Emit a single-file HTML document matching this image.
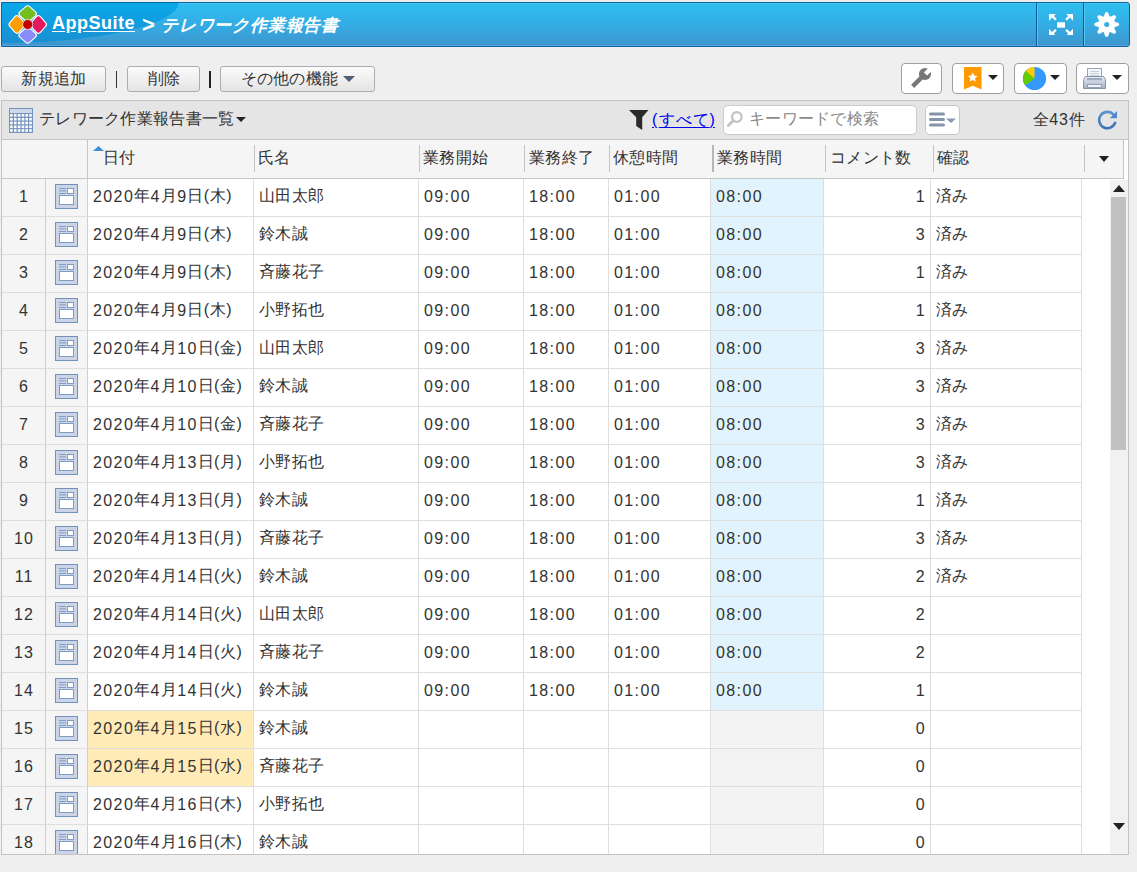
<!DOCTYPE html>
<html lang="ja"><head><meta charset="utf-8">
<style>
*{box-sizing:border-box;margin:0;padding:0}
html,body{width:1137px;height:872px;overflow:hidden;background:#efefef;font-family:"Liberation Sans",sans-serif;font-size:16px;color:#333;position:relative;letter-spacing:0.3px}
.abs{position:absolute}
.nw{white-space:nowrap}
.d{letter-spacing:1.4px;position:relative;top:1px}
.p{letter-spacing:0.8px}
#hdr{position:absolute;left:1px;top:2px;width:1129px;height:45px;border:1px solid #0b63a0;border-radius:0 3px 3px 0;
 background:linear-gradient(to bottom,#2ebef0 0%,#33ade4 50%,#3e95cc 100%);overflow:hidden;box-shadow:inset 0 1px 0 #4ac4f0,inset 0 -1px 0 #58a4da}
#gloss{position:absolute;left:-179px;top:-42px;width:356px;height:82px;border-radius:50%;background:linear-gradient(to bottom,#08aae9 50%,#1a8fd3 100%)}
#hdr .t1{position:absolute;left:50px;top:10px;color:#fff;font-weight:bold;font-size:18px;white-space:nowrap;text-decoration:underline;text-underline-offset:2px;letter-spacing:0.5px}
#hdr .t2{position:absolute;left:140px;top:9px;color:#fff;font-weight:bold;font-size:22px;white-space:nowrap}
#hdr .t3{position:absolute;left:159px;top:11px;color:#fff;font-weight:bold;font-size:17px;white-space:nowrap;font-style:italic;letter-spacing:0.8px}
.sep{position:absolute;top:0;width:2px;height:43px;border-left:1px solid #0b5f98;border-right:1px solid #58c3ee}
.btn{position:absolute;top:66px;height:26px;border:1px solid #adadad;border-radius:3px;background:linear-gradient(#fbfbfb,#e4e4e4);text-align:center;line-height:23px;padding-left:1px;color:#333;white-space:nowrap}
.ibtn{position:absolute;top:63px;height:31px;border:1px solid #a0a0a0;border-radius:4px;background:#fff}
.arr{position:absolute;width:0;height:0;border-left:5px solid transparent;border-right:5px solid transparent;border-top:5px solid #222}
#panelbg{position:absolute;left:1px;top:100px;width:1128px;height:755px;background:#fff}
#panelbd{position:absolute;left:1px;top:100px;width:1128px;height:755px;border:1px solid #c3c3c3}
#tbar{position:absolute;left:2px;top:101px;width:1126px;height:39px;background:#e5e5e5;border-bottom:1px solid #c6c6c6}
#ghead{position:absolute;left:2px;top:140px;width:1122px;height:39px;background:#f5f5f5;border-bottom:1px solid #c6c6c6;border-right:1px solid #c6c6c6}
.hc{position:absolute;top:140px;height:38px;line-height:36px;color:#333;white-space:nowrap}
.hsep{position:absolute;top:145px;width:1px;height:27px;background:#c4c4c4}
#clip{position:absolute;left:0;top:0;width:1137px;height:854px;overflow:hidden}
.row{position:absolute;left:0;width:1081px;height:38px}
.c{position:absolute;top:0;height:38px;border-right:1px solid #dedede;border-bottom:1px solid #dedede;line-height:33px;padding-left:5px;white-space:nowrap;background:#fff;color:#333}
.c.rn{background:#f5f5f5;text-align:center;padding-left:2px;letter-spacing:1px;padding-top:1px;border-right:1px solid #cfcfcf;border-bottom-color:#dcdcdc;padding-right:1px}
.c.ic{background:#f5f5f5;padding-left:0;line-height:0;border-right-color:#cfcfcf}
.ri{position:absolute;left:9px;top:5px}
.c.yel{background:#ffebb7}
.c.blue{background:#e1f3fc}
.c.grey{background:#f3f3f3}
.c.r{text-align:right;padding-right:4px;padding-left:0}
</style></head><body>
<svg width="0" height="0" style="position:absolute">
 <defs>
  <g id="rec">
   <rect x="0.5" y="0.5" width="22" height="24" fill="#cbd5e7" stroke="#7192bf"/>
   <rect x="4" y="4" width="7" height="1" fill="#7f9cc4"/>
   <rect x="4" y="6" width="7" height="1.6" fill="#9bb1d0"/>
   <rect x="4" y="9" width="7" height="1" fill="#7f9cc4"/>
   <rect x="12.5" y="4.5" width="6" height="5" fill="#fff" stroke="#7f9cc4"/>
   <rect x="4.5" y="11.5" width="14" height="9" fill="#fff" stroke="#7f9cc4"/>
  </g>
 </defs>
</svg>
<div id="hdr">
 
 <div id="gloss"></div><svg class="abs" style="left:0;top:0" width="50" height="44" viewBox="2 3 50 44" stroke-linejoin="round"><path d="M27.70 8.80L33.40 13.80L27.70 18.80L22.00 13.80Z" fill="#fff" stroke="#fff" stroke-width="7.00"/><path d="M38.40 18.80L43.40 24.50L38.40 30.20L33.40 24.50Z" fill="#fff" stroke="#fff" stroke-width="7.00"/><path d="M27.70 30.20L33.40 35.20L27.70 40.20L22.00 35.20Z" fill="#fff" stroke="#fff" stroke-width="7.00"/><path d="M17.00 18.80L22.00 24.50L17.00 30.20L12.00 24.50Z" fill="#fff" stroke="#fff" stroke-width="7.00"/><path d="M27.70 8.80L33.40 13.80L27.70 18.80L22.00 13.80Z" fill="#74bf1f" stroke="#74bf1f" stroke-width="4.80"/><path d="M38.40 18.80L43.40 24.50L38.40 30.20L33.40 24.50Z" fill="#e5195e" stroke="#e5195e" stroke-width="4.80"/><path d="M27.70 30.20L33.40 35.20L27.70 40.20L22.00 35.20Z" fill="#8b8cf9" stroke="#8b8cf9" stroke-width="4.80"/><path d="M17.00 18.80L22.00 24.50L17.00 30.20L12.00 24.50Z" fill="#ff9d00" stroke="#ff9d00" stroke-width="4.80"/><circle cx="27.7" cy="24.5" r="5.3" fill="#f3dede"/><circle cx="27.7" cy="24.5" r="4.6" fill="#c40000"/></svg><div class="t1">AppSuite</div><div class="t2">&gt;</div><div class="t3">テレワーク作業報告書</div>
 <div class="sep" style="left:1034px"></div>
 <div class="sep" style="left:1081px"></div>
 <svg class="abs" style="left:1047px;top:10.5px" width="24" height="21.5" viewBox="0 0 24 22" preserveAspectRatio="none" fill="#fff">
  <rect x="8" y="8.5" width="8" height="5.5"/>
  <path d="M0 0H6.8L4.8 2 7.8 5 6.1 6.7 3.1 3.7 0 6.8z"/>
  <path d="M24 0H17.2L19.2 2 16.2 5 17.9 6.7 20.9 3.7 24 6.8z"/>
  <path d="M0 22H6.8L4.8 20 7.8 17 6.1 15.3 3.1 18.3 0 15.2z"/>
  <path d="M24 22H17.2L19.2 20 16.2 17 17.9 15.3 20.9 18.3 24 15.2z"/>
 </svg>
 <svg class="abs" style="left:1092px;top:9px" width="26" height="26" viewBox="0 0 26 26">
  <g fill="#fff" transform="translate(12.7 12.4)">
   <circle r="8.4"/>
   <g id="tooth"><path d="M-3.2 -6.8L-1.4 -12Q0 -12.8 1.4 -12L3.2 -6.8z"/></g>
   <use href="#tooth" transform="rotate(45)"/><use href="#tooth" transform="rotate(90)"/><use href="#tooth" transform="rotate(135)"/>
   <use href="#tooth" transform="rotate(180)"/><use href="#tooth" transform="rotate(225)"/><use href="#tooth" transform="rotate(270)"/><use href="#tooth" transform="rotate(315)"/>
  </g>
  <circle cx="12.7" cy="12.4" r="2.5" fill="#33ade4"/>
 </svg>
</div>

<!-- toolbar -->
<div class="btn" style="left:1px;width:105px">新規追加</div>
<div class="abs" style="left:116px;top:71px;width:1px;height:17px;background:#333"></div>
<div class="btn" style="left:127px;width:73px">削除</div>
<div class="abs" style="left:209px;top:71px;width:2px;height:17px;background:#222"></div>
<div class="btn" style="left:220px;width:155px">その他の機能<span style="display:inline-block;width:0;height:0;border-left:6px solid transparent;border-right:6px solid transparent;border-top:6px solid #4f6078;vertical-align:middle;margin-left:5px;margin-top:-2px"></span></div>

<div class="ibtn" style="left:901px;width:41px">
 <svg class="abs" style="left:3px;top:0px" width="32" height="28" viewBox="0 0 32 28"><defs><mask id="wm"><rect width="32" height="28" fill="#fff"/><path d="M18.9 8.5L22.1 11.6L28 5.7L24.8 2.6z" fill="#000"/></mask></defs><g fill="#777" mask="url(#wm)"><circle cx="20" cy="10" r="6.1"/><path d="M6.1 20.8L9.1 23.9L19.6 13.4L16.6 10.3z"/></g></svg>
</div>
<div class="ibtn" style="left:952px;width:52px">
 <svg class="abs" style="left:11px;top:3px" width="18" height="24" viewBox="0 0 18 24"><path d="M0 0h17.5v22.5l-8.75-3.8-8.75 3.8z" fill="#ff9900"/><path d="M8.75 5.6l1.45 3 3.3.4-2.4 2.3.65 3.3-3-1.6-3 1.6.65-3.3-2.4-2.3 3.3-.4z" fill="#fff"/></svg>
 <span class="arr" style="left:35px;top:11px"></span>
</div>
<div class="ibtn" style="left:1014px;width:53px">
 <svg class="abs" style="left:7px;top:2px" width="25" height="25" viewBox="0 0 25 25"><circle cx="12.5" cy="12.5" r="11.6" fill="#3399ff"/><path d="M12.5 12.5V0.9A11.6 11.6 0 0 0 3.6 5z" fill="#ffcc00"/><path d="M12.5 12.5L3.6 5A11.6 11.6 0 0 0 3.2 19.5z" fill="#66cc00"/></svg>
 <span class="arr" style="left:35px;top:11px"></span>
</div>
<div class="ibtn" style="left:1076px;width:53px">
 <svg class="abs" style="left:6px;top:4px" width="24" height="22" viewBox="0 0 24 22">
  <defs><linearGradient id="pg" x1="0" y1="0" x2="0" y2="1"><stop offset="0" stop-color="#e6ecf4"/><stop offset="1" stop-color="#a3b2c6"/></linearGradient></defs>
  <rect x="4.5" y="0.5" width="14" height="10" fill="#f4f7fb" stroke="#94a4bb"/>
  <rect x="7" y="3" width="9" height="0.8" fill="#b5c3d5"/><rect x="7" y="5" width="9" height="0.8" fill="#b5c3d5"/><rect x="7" y="7" width="9" height="0.8" fill="#b5c3d5"/>
  <path d="M2.5 8.5h18l2 3v9H0.5v-9z" fill="url(#pg)" stroke="#8795aa"/>
  <rect x="4" y="10" width="15" height="2.2" fill="#9eacbf"/>
  <rect x="4.5" y="16.5" width="14" height="3" fill="#f1f4f8" stroke="#8d9bb0" stroke-width="0.9"/>
 </svg>
 <span class="arr" style="left:35px;top:11px"></span>
</div>

<div id="panelbg"></div>
<div id="tbar"></div>
<svg class="abs" style="left:9px;top:108px" width="24" height="25" viewBox="0 0 24 25">
 <rect x="0" y="0" width="24" height="25" fill="#7393bf"/>
 <rect x="1" y="1" width="22" height="4" fill="#d0d8ea"/>
 <g fill="#fff">
 <rect x="1.12" y="6.08" width="2.6" height="2.6"/><rect x="1.12" y="9.93" width="2.6" height="2.6"/><rect x="1.12" y="13.70" width="2.6" height="2.6"/><rect x="1.12" y="17.53" width="2.6" height="2.6"/><rect x="1.12" y="21.20" width="2.6" height="2.6"/><rect x="4.98" y="6.08" width="2.6" height="2.6"/><rect x="4.98" y="9.93" width="2.6" height="2.6"/><rect x="4.98" y="13.70" width="2.6" height="2.6"/><rect x="4.98" y="17.53" width="2.6" height="2.6"/><rect x="4.98" y="21.20" width="2.6" height="2.6"/><rect x="8.83" y="6.08" width="2.6" height="2.6"/><rect x="8.83" y="9.93" width="2.6" height="2.6"/><rect x="8.83" y="13.70" width="2.6" height="2.6"/><rect x="8.83" y="17.53" width="2.6" height="2.6"/><rect x="8.83" y="21.20" width="2.6" height="2.6"/><rect x="12.68" y="6.08" width="2.6" height="2.6"/><rect x="12.68" y="9.93" width="2.6" height="2.6"/><rect x="12.68" y="13.70" width="2.6" height="2.6"/><rect x="12.68" y="17.53" width="2.6" height="2.6"/><rect x="12.68" y="21.20" width="2.6" height="2.6"/><rect x="16.42" y="6.08" width="2.6" height="2.6"/><rect x="16.42" y="9.93" width="2.6" height="2.6"/><rect x="16.42" y="13.70" width="2.6" height="2.6"/><rect x="16.42" y="17.53" width="2.6" height="2.6"/><rect x="16.42" y="21.20" width="2.6" height="2.6"/><rect x="20.20" y="6.08" width="2.6" height="2.6"/><rect x="20.20" y="9.93" width="2.6" height="2.6"/><rect x="20.20" y="13.70" width="2.6" height="2.6"/><rect x="20.20" y="17.53" width="2.6" height="2.6"/><rect x="20.20" y="21.20" width="2.6" height="2.6"/>
 </g>
</svg>
<div class="abs nw" style="left:39px;top:109px">テレワーク作業報告書一覧<span style="display:inline-block;border-left:5px solid transparent;border-right:5px solid transparent;border-top:5px solid #222;vertical-align:middle;margin-left:1px;margin-top:-1px"></span></div>
<svg class="abs" style="left:629px;top:110px" width="20" height="20" viewBox="0 0 20 20"><path d="M0 0h19.5l-6.3 7.3V20l-6-4V7.3z" fill="#2a2a2a"/></svg>
<div class="abs nw" style="left:652px;top:110px;color:#0000ee;text-decoration:underline;text-underline-offset:2px;letter-spacing:0.9px"><span style="letter-spacing:1.5px">(</span>すべて<span style="letter-spacing:0">)</span></div>
<div class="abs" style="left:723px;top:105px;width:194px;height:30px;background:#fff;border:1px solid #cccccc;border-radius:5px">
 <svg class="abs" style="left:2px;top:3px" width="18" height="18" viewBox="0 0 18 18"><circle cx="10.8" cy="8" r="4.8" fill="none" stroke="#c2c2c2" stroke-width="2.2"/><path d="M7.3 11.5L2.3 16.5" stroke="#c2c2c2" stroke-width="2.6" stroke-linecap="round"/></svg>
 <span class="abs nw" style="left:25px;top:3px;color:#888">キーワードで検索</span>
</div>
<div class="abs" style="left:925px;top:105px;width:35px;height:30px;background:#fff;border:1px solid #c6c6c6;border-radius:5px">
 <svg class="abs" style="left:3px;top:6px" width="28" height="16" viewBox="0 0 28 16"><rect x="0" y="0.5" width="16" height="3" rx="1.5" fill="#8593ab"/><rect x="0" y="6" width="16" height="3" rx="1.5" fill="#8593ab"/><rect x="0" y="11.5" width="16" height="3" rx="1.5" fill="#8593ab"/><path d="M17 6.5h10l-5 4.5z" fill="#8a9ab5"/></svg>
</div>
<div class="abs nw" style="left:1033px;top:110px">全<span class="d" style="letter-spacing:0.8px;top:0">43</span>件</div>
<svg class="abs" style="left:1096px;top:110px" width="22" height="20" viewBox="0 0 22 20"><defs><linearGradient id="rg" x1="0" y1="0" x2="0" y2="1"><stop offset="0" stop-color="#5b93cf"/><stop offset="1" stop-color="#3a72b6"/></linearGradient></defs><path d="M17.7 4.8A8.2 8.2 0 1 0 19.4 11.8" fill="none" stroke="url(#rg)" stroke-width="2.6"/><path d="M21 1v7.3h-7.2z" fill="#4f88c8"/></svg>

<div id="ghead"></div>
<div class="hsep" style="left:87px;top:140px;height:38px;background:#c6c6c6"></div>
<svg class="abs" style="left:93px;top:146px" width="11" height="5" viewBox="0 0 11 5"><path d="M0 5L5.5 0 11 5z" fill="#3d8fd6"/></svg>
<div class="hc" style="left:103px">日付</div>
<div class="hsep" style="left:254px"></div><div class="hc" style="left:258px">氏名</div>
<div class="hsep" style="left:419px"></div><div class="hc" style="left:423px">業務開始</div>
<div class="hsep" style="left:524px"></div><div class="hc" style="left:529px">業務終了</div>
<div class="hsep" style="left:609px"></div><div class="hc" style="left:613px">休憩時間</div>
<div class="hsep" style="left:712px;width:2px;background:#b8b8b8"></div><div class="hc" style="left:717px">業務時間</div>
<div class="hsep" style="left:825px"></div><div class="hc" style="left:830px">コメント数</div>
<div class="hsep" style="left:933px"></div><div class="hc" style="left:937px">確認</div>
<div class="hsep" style="left:1084px"></div>
<span class="arr" style="left:1099px;top:156px;border-left-width:5.5px;border-right-width:5.5px;border-top-width:6px"></span>

<div id="clip">
<div class="row" style="top:179px"><div class="c rn" style="left:2px;width:44px">1</div><div class="c ic" style="left:46px;width:42px"><svg class="ri" width="23" height="25" viewBox="0 0 23 25"><use href="#rec"/></svg></div><div class="c " style="left:88px;width:166px"><span class="d">2020</span>年<span class="d">4</span>月<span class="d">9</span>日<span class="p">(</span>木<span class="p">)</span></div><div class="c " style="left:254px;width:165px">山田太郎</div><div class="c " style="left:419px;width:105px"><span class="d">09:00</span></div><div class="c " style="left:524px;width:85px"><span class="d">18:00</span></div><div class="c " style="left:609px;width:102px"><span class="d">01:00</span></div><div class="c blue" style="left:711px;width:113px"><span class="d">08:00</span></div><div class="c r" style="left:824px;width:107px"><span class="d">1</span></div><div class="c " style="left:931px;width:151px">済み</div></div>
<div class="row" style="top:217px"><div class="c rn" style="left:2px;width:44px">2</div><div class="c ic" style="left:46px;width:42px"><svg class="ri" width="23" height="25" viewBox="0 0 23 25"><use href="#rec"/></svg></div><div class="c " style="left:88px;width:166px"><span class="d">2020</span>年<span class="d">4</span>月<span class="d">9</span>日<span class="p">(</span>木<span class="p">)</span></div><div class="c " style="left:254px;width:165px">鈴木誠</div><div class="c " style="left:419px;width:105px"><span class="d">09:00</span></div><div class="c " style="left:524px;width:85px"><span class="d">18:00</span></div><div class="c " style="left:609px;width:102px"><span class="d">01:00</span></div><div class="c blue" style="left:711px;width:113px"><span class="d">08:00</span></div><div class="c r" style="left:824px;width:107px"><span class="d">3</span></div><div class="c " style="left:931px;width:151px">済み</div></div>
<div class="row" style="top:255px"><div class="c rn" style="left:2px;width:44px">3</div><div class="c ic" style="left:46px;width:42px"><svg class="ri" width="23" height="25" viewBox="0 0 23 25"><use href="#rec"/></svg></div><div class="c " style="left:88px;width:166px"><span class="d">2020</span>年<span class="d">4</span>月<span class="d">9</span>日<span class="p">(</span>木<span class="p">)</span></div><div class="c " style="left:254px;width:165px">斉藤花子</div><div class="c " style="left:419px;width:105px"><span class="d">09:00</span></div><div class="c " style="left:524px;width:85px"><span class="d">18:00</span></div><div class="c " style="left:609px;width:102px"><span class="d">01:00</span></div><div class="c blue" style="left:711px;width:113px"><span class="d">08:00</span></div><div class="c r" style="left:824px;width:107px"><span class="d">1</span></div><div class="c " style="left:931px;width:151px">済み</div></div>
<div class="row" style="top:293px"><div class="c rn" style="left:2px;width:44px">4</div><div class="c ic" style="left:46px;width:42px"><svg class="ri" width="23" height="25" viewBox="0 0 23 25"><use href="#rec"/></svg></div><div class="c " style="left:88px;width:166px"><span class="d">2020</span>年<span class="d">4</span>月<span class="d">9</span>日<span class="p">(</span>木<span class="p">)</span></div><div class="c " style="left:254px;width:165px">小野拓也</div><div class="c " style="left:419px;width:105px"><span class="d">09:00</span></div><div class="c " style="left:524px;width:85px"><span class="d">18:00</span></div><div class="c " style="left:609px;width:102px"><span class="d">01:00</span></div><div class="c blue" style="left:711px;width:113px"><span class="d">08:00</span></div><div class="c r" style="left:824px;width:107px"><span class="d">1</span></div><div class="c " style="left:931px;width:151px">済み</div></div>
<div class="row" style="top:331px"><div class="c rn" style="left:2px;width:44px">5</div><div class="c ic" style="left:46px;width:42px"><svg class="ri" width="23" height="25" viewBox="0 0 23 25"><use href="#rec"/></svg></div><div class="c " style="left:88px;width:166px"><span class="d">2020</span>年<span class="d">4</span>月<span class="d">10</span>日<span class="p">(</span>金<span class="p">)</span></div><div class="c " style="left:254px;width:165px">山田太郎</div><div class="c " style="left:419px;width:105px"><span class="d">09:00</span></div><div class="c " style="left:524px;width:85px"><span class="d">18:00</span></div><div class="c " style="left:609px;width:102px"><span class="d">01:00</span></div><div class="c blue" style="left:711px;width:113px"><span class="d">08:00</span></div><div class="c r" style="left:824px;width:107px"><span class="d">3</span></div><div class="c " style="left:931px;width:151px">済み</div></div>
<div class="row" style="top:369px"><div class="c rn" style="left:2px;width:44px">6</div><div class="c ic" style="left:46px;width:42px"><svg class="ri" width="23" height="25" viewBox="0 0 23 25"><use href="#rec"/></svg></div><div class="c " style="left:88px;width:166px"><span class="d">2020</span>年<span class="d">4</span>月<span class="d">10</span>日<span class="p">(</span>金<span class="p">)</span></div><div class="c " style="left:254px;width:165px">鈴木誠</div><div class="c " style="left:419px;width:105px"><span class="d">09:00</span></div><div class="c " style="left:524px;width:85px"><span class="d">18:00</span></div><div class="c " style="left:609px;width:102px"><span class="d">01:00</span></div><div class="c blue" style="left:711px;width:113px"><span class="d">08:00</span></div><div class="c r" style="left:824px;width:107px"><span class="d">3</span></div><div class="c " style="left:931px;width:151px">済み</div></div>
<div class="row" style="top:407px"><div class="c rn" style="left:2px;width:44px">7</div><div class="c ic" style="left:46px;width:42px"><svg class="ri" width="23" height="25" viewBox="0 0 23 25"><use href="#rec"/></svg></div><div class="c " style="left:88px;width:166px"><span class="d">2020</span>年<span class="d">4</span>月<span class="d">10</span>日<span class="p">(</span>金<span class="p">)</span></div><div class="c " style="left:254px;width:165px">斉藤花子</div><div class="c " style="left:419px;width:105px"><span class="d">09:00</span></div><div class="c " style="left:524px;width:85px"><span class="d">18:00</span></div><div class="c " style="left:609px;width:102px"><span class="d">01:00</span></div><div class="c blue" style="left:711px;width:113px"><span class="d">08:00</span></div><div class="c r" style="left:824px;width:107px"><span class="d">3</span></div><div class="c " style="left:931px;width:151px">済み</div></div>
<div class="row" style="top:445px"><div class="c rn" style="left:2px;width:44px">8</div><div class="c ic" style="left:46px;width:42px"><svg class="ri" width="23" height="25" viewBox="0 0 23 25"><use href="#rec"/></svg></div><div class="c " style="left:88px;width:166px"><span class="d">2020</span>年<span class="d">4</span>月<span class="d">13</span>日<span class="p">(</span>月<span class="p">)</span></div><div class="c " style="left:254px;width:165px">小野拓也</div><div class="c " style="left:419px;width:105px"><span class="d">09:00</span></div><div class="c " style="left:524px;width:85px"><span class="d">18:00</span></div><div class="c " style="left:609px;width:102px"><span class="d">01:00</span></div><div class="c blue" style="left:711px;width:113px"><span class="d">08:00</span></div><div class="c r" style="left:824px;width:107px"><span class="d">3</span></div><div class="c " style="left:931px;width:151px">済み</div></div>
<div class="row" style="top:483px"><div class="c rn" style="left:2px;width:44px">9</div><div class="c ic" style="left:46px;width:42px"><svg class="ri" width="23" height="25" viewBox="0 0 23 25"><use href="#rec"/></svg></div><div class="c " style="left:88px;width:166px"><span class="d">2020</span>年<span class="d">4</span>月<span class="d">13</span>日<span class="p">(</span>月<span class="p">)</span></div><div class="c " style="left:254px;width:165px">鈴木誠</div><div class="c " style="left:419px;width:105px"><span class="d">09:00</span></div><div class="c " style="left:524px;width:85px"><span class="d">18:00</span></div><div class="c " style="left:609px;width:102px"><span class="d">01:00</span></div><div class="c blue" style="left:711px;width:113px"><span class="d">08:00</span></div><div class="c r" style="left:824px;width:107px"><span class="d">1</span></div><div class="c " style="left:931px;width:151px">済み</div></div>
<div class="row" style="top:521px"><div class="c rn" style="left:2px;width:44px">10</div><div class="c ic" style="left:46px;width:42px"><svg class="ri" width="23" height="25" viewBox="0 0 23 25"><use href="#rec"/></svg></div><div class="c " style="left:88px;width:166px"><span class="d">2020</span>年<span class="d">4</span>月<span class="d">13</span>日<span class="p">(</span>月<span class="p">)</span></div><div class="c " style="left:254px;width:165px">斉藤花子</div><div class="c " style="left:419px;width:105px"><span class="d">09:00</span></div><div class="c " style="left:524px;width:85px"><span class="d">18:00</span></div><div class="c " style="left:609px;width:102px"><span class="d">01:00</span></div><div class="c blue" style="left:711px;width:113px"><span class="d">08:00</span></div><div class="c r" style="left:824px;width:107px"><span class="d">3</span></div><div class="c " style="left:931px;width:151px">済み</div></div>
<div class="row" style="top:559px"><div class="c rn" style="left:2px;width:44px">11</div><div class="c ic" style="left:46px;width:42px"><svg class="ri" width="23" height="25" viewBox="0 0 23 25"><use href="#rec"/></svg></div><div class="c " style="left:88px;width:166px"><span class="d">2020</span>年<span class="d">4</span>月<span class="d">14</span>日<span class="p">(</span>火<span class="p">)</span></div><div class="c " style="left:254px;width:165px">鈴木誠</div><div class="c " style="left:419px;width:105px"><span class="d">09:00</span></div><div class="c " style="left:524px;width:85px"><span class="d">18:00</span></div><div class="c " style="left:609px;width:102px"><span class="d">01:00</span></div><div class="c blue" style="left:711px;width:113px"><span class="d">08:00</span></div><div class="c r" style="left:824px;width:107px"><span class="d">2</span></div><div class="c " style="left:931px;width:151px">済み</div></div>
<div class="row" style="top:597px"><div class="c rn" style="left:2px;width:44px">12</div><div class="c ic" style="left:46px;width:42px"><svg class="ri" width="23" height="25" viewBox="0 0 23 25"><use href="#rec"/></svg></div><div class="c " style="left:88px;width:166px"><span class="d">2020</span>年<span class="d">4</span>月<span class="d">14</span>日<span class="p">(</span>火<span class="p">)</span></div><div class="c " style="left:254px;width:165px">山田太郎</div><div class="c " style="left:419px;width:105px"><span class="d">09:00</span></div><div class="c " style="left:524px;width:85px"><span class="d">18:00</span></div><div class="c " style="left:609px;width:102px"><span class="d">01:00</span></div><div class="c blue" style="left:711px;width:113px"><span class="d">08:00</span></div><div class="c r" style="left:824px;width:107px"><span class="d">2</span></div><div class="c " style="left:931px;width:151px"></div></div>
<div class="row" style="top:635px"><div class="c rn" style="left:2px;width:44px">13</div><div class="c ic" style="left:46px;width:42px"><svg class="ri" width="23" height="25" viewBox="0 0 23 25"><use href="#rec"/></svg></div><div class="c " style="left:88px;width:166px"><span class="d">2020</span>年<span class="d">4</span>月<span class="d">14</span>日<span class="p">(</span>火<span class="p">)</span></div><div class="c " style="left:254px;width:165px">斉藤花子</div><div class="c " style="left:419px;width:105px"><span class="d">09:00</span></div><div class="c " style="left:524px;width:85px"><span class="d">18:00</span></div><div class="c " style="left:609px;width:102px"><span class="d">01:00</span></div><div class="c blue" style="left:711px;width:113px"><span class="d">08:00</span></div><div class="c r" style="left:824px;width:107px"><span class="d">2</span></div><div class="c " style="left:931px;width:151px"></div></div>
<div class="row" style="top:673px"><div class="c rn" style="left:2px;width:44px">14</div><div class="c ic" style="left:46px;width:42px"><svg class="ri" width="23" height="25" viewBox="0 0 23 25"><use href="#rec"/></svg></div><div class="c " style="left:88px;width:166px"><span class="d">2020</span>年<span class="d">4</span>月<span class="d">14</span>日<span class="p">(</span>火<span class="p">)</span></div><div class="c " style="left:254px;width:165px">鈴木誠</div><div class="c " style="left:419px;width:105px"><span class="d">09:00</span></div><div class="c " style="left:524px;width:85px"><span class="d">18:00</span></div><div class="c " style="left:609px;width:102px"><span class="d">01:00</span></div><div class="c blue" style="left:711px;width:113px"><span class="d">08:00</span></div><div class="c r" style="left:824px;width:107px"><span class="d">1</span></div><div class="c " style="left:931px;width:151px"></div></div>
<div class="row" style="top:711px"><div class="c rn" style="left:2px;width:44px">15</div><div class="c ic" style="left:46px;width:42px"><svg class="ri" width="23" height="25" viewBox="0 0 23 25"><use href="#rec"/></svg></div><div class="c yel" style="left:88px;width:166px"><span class="d">2020</span>年<span class="d">4</span>月<span class="d">15</span>日<span class="p">(</span>水<span class="p">)</span></div><div class="c " style="left:254px;width:165px">鈴木誠</div><div class="c " style="left:419px;width:105px"></div><div class="c " style="left:524px;width:85px"></div><div class="c " style="left:609px;width:102px"></div><div class="c grey" style="left:711px;width:113px"></div><div class="c r" style="left:824px;width:107px"><span class="d">0</span></div><div class="c " style="left:931px;width:151px"></div></div>
<div class="row" style="top:749px"><div class="c rn" style="left:2px;width:44px">16</div><div class="c ic" style="left:46px;width:42px"><svg class="ri" width="23" height="25" viewBox="0 0 23 25"><use href="#rec"/></svg></div><div class="c yel" style="left:88px;width:166px"><span class="d">2020</span>年<span class="d">4</span>月<span class="d">15</span>日<span class="p">(</span>水<span class="p">)</span></div><div class="c " style="left:254px;width:165px">斉藤花子</div><div class="c " style="left:419px;width:105px"></div><div class="c " style="left:524px;width:85px"></div><div class="c " style="left:609px;width:102px"></div><div class="c grey" style="left:711px;width:113px"></div><div class="c r" style="left:824px;width:107px"><span class="d">0</span></div><div class="c " style="left:931px;width:151px"></div></div>
<div class="row" style="top:787px"><div class="c rn" style="left:2px;width:44px">17</div><div class="c ic" style="left:46px;width:42px"><svg class="ri" width="23" height="25" viewBox="0 0 23 25"><use href="#rec"/></svg></div><div class="c " style="left:88px;width:166px"><span class="d">2020</span>年<span class="d">4</span>月<span class="d">16</span>日<span class="p">(</span>木<span class="p">)</span></div><div class="c " style="left:254px;width:165px">小野拓也</div><div class="c " style="left:419px;width:105px"></div><div class="c " style="left:524px;width:85px"></div><div class="c " style="left:609px;width:102px"></div><div class="c grey" style="left:711px;width:113px"></div><div class="c r" style="left:824px;width:107px"><span class="d">0</span></div><div class="c " style="left:931px;width:151px"></div></div>
<div class="row" style="top:825px"><div class="c rn" style="left:2px;width:44px">18</div><div class="c ic" style="left:46px;width:42px"><svg class="ri" width="23" height="25" viewBox="0 0 23 25"><use href="#rec"/></svg></div><div class="c " style="left:88px;width:166px"><span class="d">2020</span>年<span class="d">4</span>月<span class="d">16</span>日<span class="p">(</span>木<span class="p">)</span></div><div class="c " style="left:254px;width:165px">鈴木誠</div><div class="c " style="left:419px;width:105px"></div><div class="c " style="left:524px;width:85px"></div><div class="c " style="left:609px;width:102px"></div><div class="c grey" style="left:711px;width:113px"></div><div class="c r" style="left:824px;width:107px"><span class="d">0</span></div><div class="c " style="left:931px;width:151px"></div></div>
</div>
<!-- scrollbar -->
<div class="abs" style="left:1110px;top:180px;width:18px;height:674px;background:#f1f1f1"></div>
<span class="abs" style="left:1113px;top:185px;width:0;height:0;border-left:6.5px solid transparent;border-right:6.5px solid transparent;border-bottom:7px solid #222"></span>
<div class="abs" style="left:1111px;top:197px;width:15px;height:253px;background:#c1c1c1"></div>
<span class="abs" style="left:1113px;top:823px;width:0;height:0;border-left:6.5px solid transparent;border-right:6.5px solid transparent;border-top:7px solid #222"></span>
<div id="panelbd"></div>
</body></html>
